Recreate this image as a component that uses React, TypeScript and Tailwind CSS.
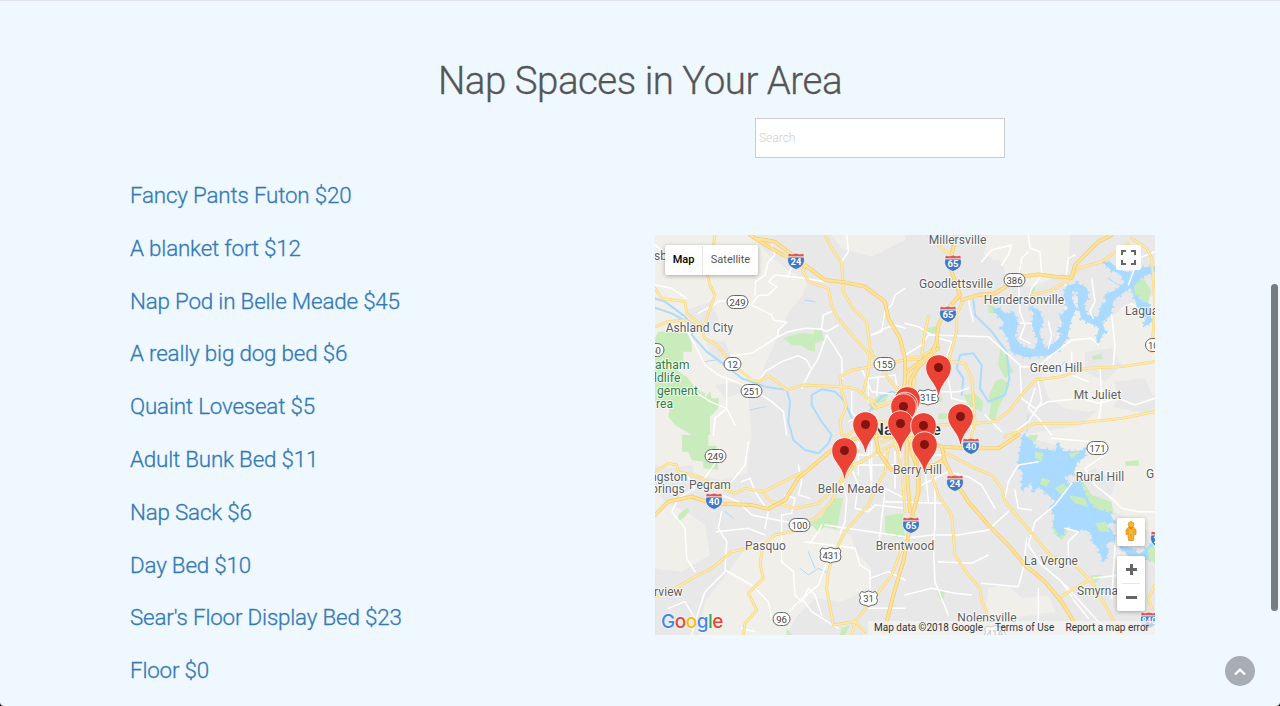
import React from "react";

const spaces = [
  "Fancy Pants Futon $20",
  "A blanket fort $12",
  "Nap Pod in Belle Meade $45",
  "A really big dog bed $6",
  "Quaint Loveseat $5",
  "Adult Bunk Bed $11",
  "Nap Sack $6",
  "Day Bed $10",
  "Sear's Floor Display Bed $23",
  "Floor $0",
];

/* Terrain is drawn on a 1500x1200 grid, labels and shields on a 500x400 grid. */
const rural = [
  "M0 0H290L340 60 400 105 460 135 440 185 400 235 370 300 330 390 310 440 280 480 290 600 275 715 200 735 150 725 90 715 0 690Z",
  "M530 0L560 40 650 65 690 45 750 15V0Z",
  "M1000 0H1245L1240 110 1130 155 1060 140 1040 80 985 60Z",
  "M1235 190L1270 185 1290 240 1330 280 1400 220 1500 180V480H1400L1370 520 1300 530 1230 520 1180 490 1160 420 1200 320Z",
  "M1280 570L1340 510 1500 540V900L1380 830 1330 720 1230 710 1230 640 1100 600Z",
  "M0 760L30 800 110 840 150 870 165 960 80 1010 0 1000Z",
  "M280 930L430 880 480 870 590 900 600 950 650 1000 640 1060 560 1100 480 1090 430 1140 390 1200H130L150 1100 220 1010Z",
  "M1000 1060L1060 1050 1100 1090 1180 1080 1200 1130 1060 1150 990 1140Z",
  "M1380 860L1420 900 1410 1000 1380 1010Z",
];
const urban = [
  "M95 225L165 200 190 250 160 300 110 270Z",
  "M150 310L210 320 230 370 210 400 170 370Z",
  "M180 450L260 440 270 470 210 490Z",
  "M1290 350L1370 340 1400 390 1350 440 1290 410Z",
  "M1380 440L1470 430 1500 500 1430 530 1390 500Z",
  "M1250 730L1320 700 1380 740 1370 780 1280 770Z",
  "M40 700L110 690 130 750 60 760Z",
];
const parks = [
  "M10 290L95 290 110 325 110 350 85 350 85 380 65 405 100 430 120 460 150 475 150 490 165 470 170 490 192 490 190 520 165 545 165 600 110 600 60 570 40 545 45 510 0 500V310Z",
  "M80 600H160V632H185V655L190 705 145 700 145 680 110 675 100 650 82 650Z",
  "M384 308L440 293 475 298 478 282 500 288 508 315 480 325 480 350 460 345 440 332 410 330Z",
  "M70 840L95 818 105 825 90 845 70 860Z",
  "M530 790L565 790 545 883 510 875 490 890 465 865 500 845Z",
  "M690 842L745 835 750 910 715 905 690 895Z",
  "M1035 340L1055 365 1075 410 1050 430 1030 390Z",
  "M1020 440L1040 430 1065 450 1030 520 1020 555 1000 555 1008 510 1000 485Z",
  "M925 480L960 475 985 500 980 530 945 515Z",
  "M818 280L845 272 848 295 815 295Z",
  "M1120 180L1140 150 1140 165 1122 190Z",
  "M1420 130L1450 110 1488 165 1480 205 1440 190Z",
  "M1310 365L1340 355 1343 372 1315 374Z",
  "M1410 680L1450 675 1452 692 1412 692Z",
  "M1200 870L1220 865 1240 890 1220 915 1195 895Z",
  "M1250 760L1285 740 1310 780 1370 800 1375 840 1320 830 1280 800Z",
  "M845 490L860 480 862 500 845 502ZM850 535L885 535 885 552 850 552Z",
  "M845 1060L870 1065 865 1100 850 1085ZM395 1180L410 1200H395ZM560 1180L585 1170 570 1200H555ZM1310 1020L1345 1020 1320 1045Z",
  "M640 510L675 480 700 480 690 500 660 505 655 530Z",
  "M1000 210L1020 215 1020 235 1000 235Z",
];
const lakes = [
  "M1016 225L1030 218 1055 240 1075 230 1088 265 1078 305 1100 335 1140 345 1150 315 1132 270 1138 235 1122 215 1150 225 1165 260 1150 290 1168 340 1200 325 1225 295 1205 290 1225 270 1215 245 1240 220 1225 185 1235 155 1265 145 1295 160 1298 190 1285 210 1295 240 1330 248 1340 210 1355 200 1350 180 1385 165 1410 140 1395 115 1370 105 1340 78 1370 85 1390 105 1425 115 1455 100 1500 95V110L1460 125 1440 150 1415 165 1375 195 1365 240 1340 260 1350 290 1340 300 1330 325 1325 310 1335 275 1300 262 1280 250 1270 210 1270 170 1250 165 1250 195 1262 220 1245 260 1235 310 1210 345 1180 360 1110 365 1070 350 1060 310 1040 280 1050 265Z",
  "M1425 145L1440 180 1460 200 1480 205 1485 235 1490 260 1465 275 1475 250 1450 220Z",
  "M1105 600L1130 615 1140 640 1175 645 1200 650 1210 630 1225 650 1260 650 1290 645 1290 665 1265 680 1255 715 1225 725 1240 750 1275 735 1290 780 1315 820 1365 835 1375 860 1340 870 1370 885 1380 915 1350 925 1360 950 1345 980 1330 935 1315 925 1310 895 1285 880 1265 890 1240 870 1215 905 1195 870 1200 840 1185 815 1205 800 1170 770 1155 755 1135 765 1130 740 1100 765 1105 715 1090 690Z",
  "M1395 935L1430 940 1455 960 1490 925 1500 935V970L1460 975 1425 965Z",
];
const islands = [
  "M1140 650L1165 655 1160 680 1140 670Z",
  "M1120 600L1150 600 1140 622 1125 612Z",
  "M1160 728L1185 735 1175 755 1155 748Z",
  "M1240 655L1275 650 1250 670Z",
  "M1200 760L1225 745 1240 765 1220 780Z",
  "M1240 780L1290 790 1300 815 1260 805Z",
  "M1320 865L1350 860 1365 890 1335 890Z",
  "M1480 940L1500 930V985L1480 970Z",
];
const rivers = [
  "M0 190L30 200 90 245 115 275 110 300 155 350 210 390 260 430 330 455 395 465 405 500 400 560 415 615 450 645 490 655 520 625 530 600 500 560 470 510 470 480 500 463 540 470 570 500 590 550 620 560 650 520 680 485 710 470 740 480",
  "M0 218L50 235 100 262",
  "M955 195L960 240 1010 290 1055 350 1063 430 1050 480 1000 500 975 460 980 390 955 355 915 360 905 400 925 430 920 480",
];
const creeks = [
  "M435 1000L460 1020 490 1000 520 1015M460 950L480 1000M150 380L180 375M210 830L235 850M1120 540L1115 590M450 195L480 200M285 525L330 515M1390 150L1360 130M1230 380L1200 410",
];
const whiteRoads = [
  "M130 235L195 198 230 198 290 210 330 230 350 240 355 255 395 262 370 285 368 305 330 330 290 355 230 362",
  "M290 208L310 182 340 180 365 155 340 140 360 120 440 128 510 140",
  "M300 180L302 140 330 120 340 80 360 60 350 30",
  "M398 128L415 80 440 60",
  "M365 308L400 290 450 280 500 282 515 290 550 270M515 300L560 370 562 430M515 300L490 370 465 410 440 460",
  "M310 440L330 410 380 380 430 362 455 375 468 400",
  "M500 280L505 240 530 230",
  "M100 290L130 350 150 390 190 420 240 440 290 460 350 500 385 530 395 600M215 430L215 520 240 570",
  "M105 460L165 500 215 520 180 550 175 600",
  "M650 300L690 280 720 270 750 280M750 160L720 180 710 210 690 230 680 290 650 300",
  "M645 430L720 420 725 450M590 470L590 530 620 570M620 400L650 470 740 480M580 560L640 530M640 430L640 500M670 430L665 480",
  "M575 0L580 50 560 80 560 90",
  "M750 360L800 330 820 300 1000 305 1050 350 1100 395 1150 395 1190 360 1250 315 1310 310 1330 330",
  "M955 260L945 220 940 190M850 310L890 320 870 380M750 265L790 275 830 300",
  "M980 80L1010 45 1070 30 1060 60 1040 90M1120 0L1125 40 1155 50 1160 120 1130 160 1115 210",
  "M1120 50L1100 70 1090 130 1095 230 1110 270 1095 310 1125 325",
  "M1095 265L1130 265M1180 260L1190 300 1180 340M1230 150L1240 70 1260 60",
  "M1310 130L1320 200 1305 230 1315 250M1370 240L1380 330 1375 390",
  "M1500 50L1450 70 1420 150M1400 220L1430 205 1460 230",
  "M1095 395L1100 490 1140 520 1180 500 1280 490 1330 505 1390 490 1440 510 1500 490",
  "M1335 395L1340 500 1330 560M1150 440L1160 500 1120 560 1080 590M1140 460L1120 520 1150 550 1190 600M1250 350L1250 420 1300 440",
  "M880 430L890 490 930 500M860 470H910L940 460M950 520L950 600M990 540L1040 590",
  "M800 750L880 710 940 725 980 750 1020 820M1050 790L1060 740 1090 690 1150 680M1080 765L1090 820 1130 825",
  "M1230 880L1270 890 1240 920 1240 980M1250 745L1200 810 1140 860 1120 930 1160 990 1220 1040 1260 1100 1300 1150",
  "M1190 610L1310 620 1350 660 1290 700 1320 750 1370 790 1400 820 1450 830 1500 830",
  "M750 910L830 900 910 900 1000 885 1060 830M840 730L840 870 835 930 840 1040 880 1140M850 980L950 985 1000 960",
  "M1115 910L1105 1000 1090 1055 980 1045M1150 1060V1170M1380 930L1370 1090M1310 1030L1400 1020",
  "M1150 980L1230 1050 1330 1160 1380 1200",
  "M750 1080L830 1060 900 1075 950 1080",
  "M560 730L575 790 570 860 555 895M510 870L750 905M450 920L600 940 615 990 645 1010 645 1080",
  "M465 925L490 890 500 870M430 690L440 740 430 780 465 790M390 780L420 790 410 835 380 840 380 980 415 1010 420 1080 440 1100 460 1060 480 1080",
  "M200 830L190 880 215 920 210 1005 290 1050 340 1100 350 1150 390 1160M185 890L280 880 330 900",
  "M145 735L170 700 190 670M260 740L285 730 300 770 340 830 330 880M95 720L120 760 70 790 50 830 90 880 95 970 120 1010",
  "M200 780L250 800 290 840 440 870M230 740L270 690 280 620",
  "M210 1010L150 1070 130 1130 110 1200M380 1160L420 1110 490 1050 520 970M440 1090L470 1130 550 1180",
  "M590 700L610 750 600 820 640 830 660 810 750 820M640 630L650 760 690 770 680 850 670 950M690 760L750 790",
  "M560 660H690M570 690H720M610 620V720M650 600V740M720 650V760M580 760L670 750M800 660H860M810 700L820 800M735 600V680M755 640V700M690 800L860 805",
  "M630 1120H750M645 1030L700 1010 750 1035",
  "M40 1120L90 1100 120 1150M260 1180L300 1190M480 1080L500 1140",
  "M0 30L50 70 80 110M0 150L50 160 95 190",
];
const yellowRoads = [
  "M180 0L170 60 155 110 165 150 180 180 165 220 150 265 145 300",
  "M0 160L20 190 90 200 95 235 140 270 148 310 185 330 235 390 290 435 310 440 340 422 365 440 395 465 445 450 560 455 600 460 640 490 680 515",
  "M0 275L40 260 90 255 130 275",
  "M440 100L460 140 520 160 530 210 545 245 600 310 645 360 640 410 625 470",
  "M510 0L530 40 560 85 565 170 590 215 635 260 645 340 660 370 700 430 740 480",
  "M560 600L555 560 575 510 560 470 555 425 590 405 650 395 750 375 830 370 890 380 930 385 950 430 955 480 960 560 950 600 945 640",
  "M750 480L700 505 660 520 640 490",
  "M750 370L790 365M750 405L780 440 765 500",
  "M820 0L870 50 890 55M900 0L890 50",
  "M850 330L810 360 780 420 765 480",
  "M820 245L810 290 800 360M925 195L905 240 905 290 880 380 850 400",
  "M960 565L1020 560 1060 530 1100 480 1140 435 1220 425 1290 400 1400 395 1500 380",
  "M1050 605L1090 590 1140 565 1260 565 1400 550 1500 530",
  "M1130 180L1190 165 1250 130M1420 25L1340 80 1270 100 1250 125",
  "M1430 10L1475 40 1490 70 1500 210 1490 350",
  "M0 710L40 685 65 690 70 710 130 725 180 750 240 775 270 760 325 770 415 725 445 710",
  "M325 775L350 800 420 820 490 805 560 740 600 690 690 640 740 620",
  "M0 1085L60 1060 130 1020 170 1000 230 950 325 930 360 900 410 890 480 850 530 800 560 730 590 690 620 680",
  "M325 930L315 985 325 1030 280 1075 305 1125 270 1165 265 1200",
  "M700 640L690 710 660 765 640 810 570 890 535 960 520 1010 515 1060 535 1170 600 1160 630 1190",
  "M745 930L710 1020 680 1060 650 1100 600 1160 590 1200",
  "M830 720L850 780 890 840 900 960 940 1020 975 1060 980 1100 995 1130 1000 1200",
  "M865 650L960 700 1010 720 1040 760 1050 800 1110 870 1160 930 1190 965 1260 990 1310 1040 1350 1110 1400 1200",
  "M1500 1050L1480 1090 1490 1120M1210 1090L1310 1030",
  "M565 620L600 580 625 560 680 560",
  "M760 620L850 570 960 565",
  "M780 640L790 700 795 760 780 820",
  "M680 620L730 600 850 590",
  "M570 600L610 650M690 560L720 620 740 700 750 830",
];
const motorways = [
  "M285 0L340 35 385 60 450 90 510 135 570 142 630 155 690 200 700 250 735 310 750 370 750 440 730 510 735 560 770 600",
  "M300 10L360 20 400 50 450 95",
  "M905 0L890 60 890 110 915 180 870 230 850 270 845 320 825 365 785 400 765 440 760 530 745 600 775 620",
  "M750 415L790 385 850 340",
  "M920 195L970 180 1020 175 1100 125 1150 118 1200 125 1250 128 1260 90 1330 20 1370 0",
  "M0 840L40 800 110 785 170 805 290 810 340 822 390 795 430 730 500 670 550 630 605 610 680 600 750 610 800 610 860 635 940 640 1030 640 1090 600",
  "M660 590L670 650 710 705M745 980L735 1010 710 1100 685 1200",
  "M770 530L765 600 770 650 790 710 790 770 775 830 760 900 745 980",
  "M755 610V700L765 830",
  "M860 635L870 680 900 740 940 800 1000 870 1060 930 1110 990 1170 1040 1220 1100 1280 1200",
  "M770 700L840 690 865 675",
];

const towns: [string, number, number][] = [
  ["Millersville", 302.5, 9],
  ["Goodlettsville", 301, 53],
  ["Hendersonville", 369, 69],
  ["Ashland City", 44.5, 97],
  ["Green Hill", 401, 137],
  ["Mt Juliet", 442.5, 164],
  ["Rural Hill", 445, 246],
  ["La Vergne", 396, 330],
  ["Nolensville", 332, 387],
  ["Brentwood", 250, 315],
  ["Berry Hill", 262.5, 239],
  ["Belle Meade", 196, 258],
  ["Pegram", 55, 254],
  ["Pasquo", 110.5, 315],
];
const cutTowns: [string, number, number][] = [
  ["sb", -1, 25],
  ["Lagua", 470, 80],
  ["G", 491, 243],
  ["Smyrna", 422, 360],
  ["ngston", -5, 246],
  ["orings", -4, 258],
  ["rview", -1, 361],
];
const stateRoutes: [string, number, number, number][] = [
  ["249", 82.5, 67, 21],
  ["386", 359.5, 45, 21],
  ["12", 77.5, 129, 17],
  ["251", 96.5, 156, 21],
  ["155", 229.5, 129, 21],
  ["249", 60.5, 221, 21],
  ["171", 442.5, 213, 21],
  ["100", 144.5, 290, 21],
  ["96", 126.5, 384, 17],
  ["50", 0.5, 115, 17],
  ["109", 501, 110, 21],
];
const usRoutes: [string, number, number, number][] = [
  ["431", 175.5, 320, 21],
  ["31", 213.5, 363.5, 18],
  ["31E", 273, 162, 21],
  ["41A", 340, 398, 21],
];
const interstates: [string, number, number][] = [
  ["24", 141, 26],
  ["65", 298, 28],
  ["65", 293, 79],
  ["40", 59, 266],
  ["40", 316, 211],
  ["24", 300, 248],
  ["65", 256, 290],
  ["24", 504, 304],
  ["840", 494, 385],
];
const pins: [number, number][] = [
  [283.5, 132.5],
  [252.5, 164.5],
  [250, 170],
  [248.5, 171.5],
  [305.5, 181.5],
  [245.5, 188.5],
  [210.5, 189.5],
  [268.5, 190.5],
  [269.5, 209.5],
  [189.5, 215.5],
];

function UsShield({ label, x, y, w }: { label: string; x: number; y: number; w: number }) {
  const h = w / 2;
  return (
    <g transform={`translate(${x} ${y})`}>
      <path
        d={`M${-h + 2} -7Q${-h / 2} -5 0 -7.5Q${h / 2} -5 ${h - 2} -7L${h} -4Q${h - 2} -1 ${h} 2Q${h} 6 ${h - 4} 6.5Q3 6.5 0 8Q-3 6.5 ${-h + 4} 6.5Q${-h} 6 ${-h} 2Q${-h + 2} -1 ${-h} -4Z`}
        fill="#fff"
        stroke="#666"
      />
      <text y="3.5" textAnchor="middle" fontSize="9.5" fill="#444">{label}</text>
    </g>
  );
}

function InterstateShield({ label, x, y }: { label: string; x: number; y: number }) {
  return (
    <g transform={`translate(${x} ${y})`}>
      <path d="M-7.5-8L-4-7 0-8 4-7 7.5-8 8.5-4H-8.5Z" fill="#d75b5b" stroke="#fff" strokeWidth=".7" />
      <path d="M-8-4H8C9.5 2 7 6 0 8.5C-7 6-9.5 2-8-4Z" fill="#3f78c4" stroke="#fff" strokeWidth=".7" />
      <text y="4" textAnchor="middle" fontSize={label.length > 2 ? 8.5 : 9.5} fontWeight="700" fill="#fff">{label}</text>
    </g>
  );
}

function MapDrawing() {
  return (
    <svg className="block h-[400px] w-[500px]" viewBox="0 0 500 400" fontFamily="Roboto, sans-serif">
      <g transform="scale(.333333)" fill="none" strokeLinejoin="round" strokeLinecap="round">
        <rect width="1500" height="1200" fill="#e8e8e8" />
        {rural.map((d) => <path key={d} d={d} fill="#f0efea" />)}
        {urban.map((d) => <path key={d} d={d} fill="#e8e8e8" />)}
        {parks.map((d) => <path key={d} d={d} fill="#c9ecbc" />)}
        {rivers.map((d) => <path key={d} d={d} stroke="#abdbfd" strokeWidth="6" />)}
        {creeks.map((d) => <path key={d} d={d} stroke="#abdbfd" strokeWidth="3" />)}
        {lakes.map((d) => <path key={d} d={d} fill="#aadaff" stroke="#aadaff" strokeWidth="3" />)}
        {lakes.map((d) => <path key={d} d={d} stroke="#aadaff" strokeWidth="15" strokeDasharray="5 14 3 23" strokeLinecap="butt" />)}
        {islands.map((d) => <path key={d} d={d} fill="#c9ecbc" />)}
        {whiteRoads.map((d) => <path key={d} d={d} stroke="#fff" strokeWidth="4.5" />)}
        {yellowRoads.map((d) => <path key={d} d={d} stroke="#f5d681" strokeWidth="8.5" />)}
        {yellowRoads.map((d) => <path key={d} d={d} stroke="#ffe9a8" strokeWidth="5" />)}
        {motorways.map((d) => <path key={d} d={d} stroke="#f3cb67" strokeWidth="11.5" />)}
        {motorways.map((d) => <path key={d} d={d} stroke="#ffe297" strokeWidth="7.5" />)}
      </g>
      <g fontSize="12" fill="#5b5f63" stroke="#fff" strokeOpacity=".75" strokeWidth="2" paintOrder="stroke" strokeLinejoin="round" letterSpacing=".08">
        {towns.map(([t, x, y]) => <text key={t} x={x} y={y} textAnchor="middle">{t}</text>)}
        {cutTowns.map(([t, x, y]) => <text key={t} x={x} y={y}>{t}</text>)}
        <g fill="#2d7d3f">
          <text x="0" y="134">atham</text>
          <text x="-4" y="147">ildlife</text>
          <text x="2" y="160">gement</text>
          <text x="1" y="173">rea</text>
        </g>
        <text x="251.5" y="200" textAnchor="middle" fontSize="16.5" fontWeight="500" fill="#303236">Nashville</text>
      </g>
      {stateRoutes.map(([t, x, y, w]) => (
        <g key={`${t}-${x}`}>
          <rect x={x - w / 2} y={y - 6.5} width={w} height="13" rx="6.5" fill="#fff" stroke="#666" />
          <text x={x} y={y + 3.5} textAnchor="middle" fontSize="9.5" fill="#444">{t}</text>
        </g>
      ))}
      {usRoutes.map(([label, x, y, w]) => <UsShield key={label} label={label} x={x} y={y} w={w} />)}
      {interstates.map(([label, x, y]) => <InterstateShield key={`${label}-${x}`} label={label} x={x} y={y} />)}
      {pins.map(([x, y]) => (
        <g key={`${x}-${y}`} transform={`translate(${x} ${y})`}>
          <path d="M0-12.8C7-12.8 12.8-7.2 12.8-.2C12.8 7 9 10.5 5.5 16C2.5 20.5 1.3 24 .8 27.2Q0 29-.8 27.2C-1.3 24-2.5 20.5-5.5 16C-9 10.5-12.8 7-12.8-.2C-12.8-7.2-7-12.8 0-12.8Z" fill="#ea4335" stroke="#fff" strokeWidth=".8" />
          <circle r="4.5" fill="#811411" />
        </g>
      ))}
    </svg>
  );
}

function NapMap() {
  return (
    <div className="relative mt-[54px] h-[400px] w-[500px] shrink-0 overflow-hidden">
      <MapDrawing />
      <div className="absolute left-[10px] top-[10px] flex h-[30px] w-[93px] items-center rounded-[2px] bg-white pt-px text-[11px] text-[#565656] shadow-[0_1px_4px_rgba(0,0,0,0.3)]">
        <span className="flex h-full w-[38px] items-center justify-center border-r border-[#e6e6e6] font-medium text-black">Map</span>
        <span className="flex-1 text-center">Satellite</span>
      </div>
      <div className="absolute left-[461px] top-[10px] flex size-[25px] items-center justify-center rounded-[2px] bg-white">
        <svg className="size-[15px]" viewBox="0 0 15 15" fill="none" stroke="#666" strokeWidth="2">
          <path d="M1 5V1H5M10 1H14V5M14 10V14H10M5 14H1V10" />
        </svg>
      </div>
      <div className="absolute left-[462px] top-[283px] flex size-[28px] items-center justify-center rounded-[2px] bg-white shadow-[0_1px_4px_rgba(0,0,0,0.3)]">
        <svg className="mb-[2px] h-[20px] w-[12px]" viewBox="0 0 12 20">
          <path d="M3.5 6H8.5L11 9V13.5L9.2 13 8.4 19.5H3.6L2.8 13 1 13.5V9Z" fill="#fbb829" stroke="#cf8721" strokeWidth=".7" />
          <circle cx="6" cy="3.5" r="2.8" fill="#fbb829" stroke="#cf8721" strokeWidth=".7" />
          <path d="M3.8 6.5L6 8.8 8.2 6.5Z" fill="#e57918" />
          <path d="M3 8V13M9 8V13M6 13V19" stroke="#cf8721" strokeWidth=".7" />
        </svg>
      </div>
      <div className="absolute left-[462px] top-[321px] flex h-[55px] w-[28px] flex-col items-center rounded-[2px] bg-white shadow-[0_1px_4px_rgba(0,0,0,0.3)]">
        <svg className="h-[55px] w-[28px]" viewBox="0 0 28 55" fill="none">
          <path d="M9 13.5H20M14.5 8V19M9 41.5H20" stroke="#666" strokeWidth="3" />
          <path d="M5 27.5H23" stroke="#e6e6e6" />
        </svg>
      </div>
      <div className="absolute bottom-[1px] left-[6px] flex text-[19px] leading-[24px] font-medium tracking-[-0.5px] [font-family:Inter,sans-serif] [text-shadow:0_0_2px_white,0_0_2px_white]">
        <span className="text-[#4285f4]">G</span>
        <span className="text-[#ea4335]">o</span>
        <span className="text-[#fbbc05]">o</span>
        <span className="text-[#4285f4]">g</span>
        <span className="text-[#34a853]">l</span>
        <span className="text-[#ea4335]">e</span>
      </div>
      <div className="absolute bottom-0 right-0 flex h-[14px] items-center whitespace-nowrap bg-[#f5f5f5]/70 px-[6px] text-[10px] leading-[14px] text-[#333]">
        <span className="w-[121px]">Map data ©2018 Google</span>
        <span className="w-[70.5px]">Terms of Use</span>
        <span>Report a map error</span>
      </div>
    </div>
  );
}

export default function App() {
  return (
    <div className="h-[706px] w-[1280px] overflow-hidden bg-black [font-family:Roboto,sans-serif]">
      <main className="relative h-full overflow-hidden rounded-b-[4px] border-t border-[#dfe3e7] bg-[#eff7ff]">
        <h1 className="pt-[56px] text-center text-[38.5px] leading-[48px] font-light tracking-[-0.5px] text-[#555] [-webkit-text-stroke:0.3px_#555]">Nap Spaces in Your Area</h1>
        <div className="ml-[755px] mt-[13px] h-[40px] w-[250px]">
          <input
            placeholder="Search"
            className="block h-[40px] w-[250px] border border-[#ccc] bg-white px-[3px] text-[12px] font-light outline-none placeholder:text-[#d0d0d0]"
          />
        </div>
        <section className="ml-[130px] mt-[23px] flex items-start">
          <ul className="w-[525px]">
            {spaces.map((space) => (
              <li key={space} className="h-[52.8px] text-[22.4px] leading-[28px] font-light tracking-[-0.19px] text-[#337ab7] [-webkit-text-stroke:0.3px_#337ab7]">
                <a href="#">{space}</a>
              </li>
            ))}
          </ul>
          <NapMap />
        </section>
        <div className="absolute right-[2px] top-[283px] h-[327px] w-[7px] rounded-full bg-[#777c80]" />
        <button aria-label="Back to top" className="absolute left-[1225px] top-[655px] flex size-[30px] items-center justify-center rounded-full bg-[#a8acb5]">
          <svg className="size-[12px]" viewBox="0 0 12 12" fill="none" stroke="#fff" strokeWidth="2.4">
            <path d="M1 9.5L6 4.7 11 9.5" />
          </svg>
        </button>
      </main>
    </div>
  );
}
